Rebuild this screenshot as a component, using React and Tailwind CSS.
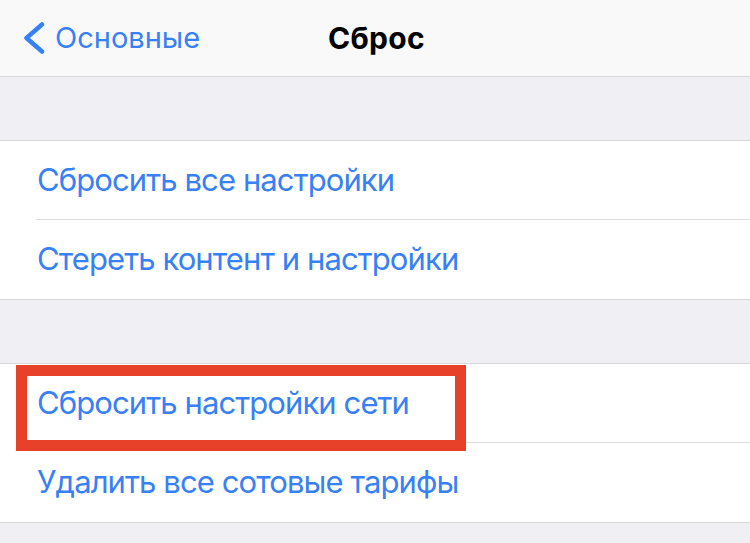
const rows = [
  ["Сбросить все настройки", "Стереть контент и настройки"],
  ["Сбросить настройки сети", "Удалить все сотовые тарифы"],
];

const font = { fontFamily: "Inter, 'Noto Sans', sans-serif" };

const Row = ({ label, last, marked }) => (
  <div className="relative flex h-[79px] items-center pl-[37px]">
    <span className="text-[31px] tracking-[-0.9px] text-[#3780F6]">{label}</span>
    {!last ? (
      <div className="absolute bottom-0 left-[36px] right-0 h-px bg-[#DCDCE0]" />
    ) : null}
    {marked ? (
      <div className="absolute left-[16px] top-[1px] h-[86px] w-[450px] border-[11px] border-[#E8412A]" />
    ) : null}
  </div>
);

export default function App() {
  return (
    <div className="h-[543px] w-[750px] overflow-hidden bg-[#EFEFF4]" style={font}>
      <header className="flex h-[77px] items-center border-b border-[#D8D8DC] bg-[#F9F9F9] px-[22px]">
        <div className="flex w-[300px] items-center gap-[9px] text-[#3780F6]">
          <svg width="24" height="32" viewBox="0 0 24 32" fill="none">
            <path
              d="M20 2.5 L4.5 16 L20 29.5"
              stroke="#3780F6"
              strokeWidth="4.5"
              strokeLinecap="round"
              strokeLinejoin="round"
            />
          </svg>
          <span className="text-[29px]">Основные</span>
        </div>
        <h1 className="ml-[6px] text-[30px] font-bold tracking-[0.3px] text-black">Сброс</h1>
      </header>

      {rows.map((group, gi) => (
        <div key={gi} className="mt-[63px] border-y border-[#D8D8DC] bg-white">
          {group.map((label, i) => (
            <Row
              key={label}
              label={label}
              last={i === group.length - 1}
              marked={label === "Сбросить настройки сети"}
            />
          ))}
        </div>
      ))}
    </div>
  );
}
